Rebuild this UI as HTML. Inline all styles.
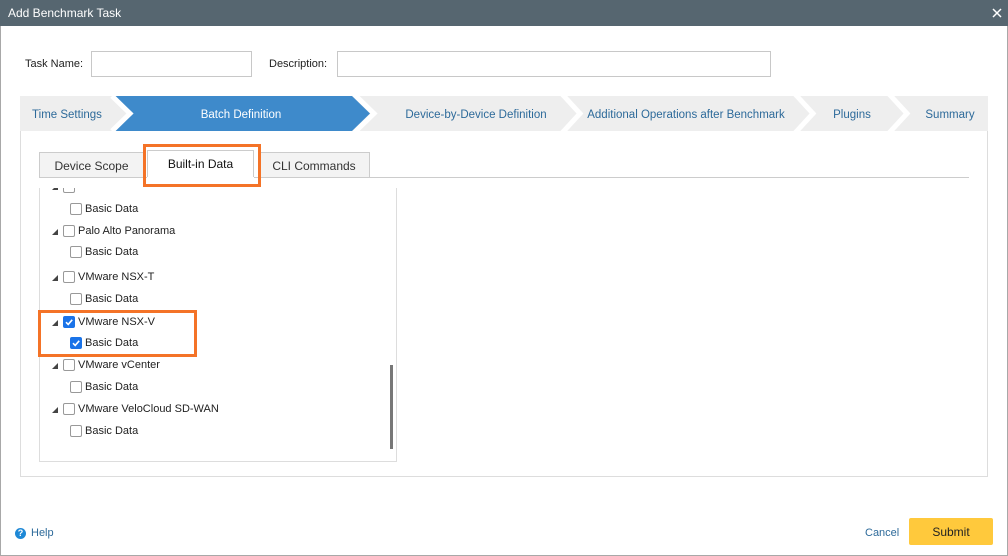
<!DOCTYPE html>
<html><head><style>
*{box-sizing:border-box;margin:0;padding:0}
body{width:1008px;height:556px;position:relative;background:#fff;font-family:"Liberation Sans",sans-serif;font-size:11.5px;color:#222;overflow:hidden}
.a{position:absolute}
.title{left:0;top:0;width:1008px;height:26px;background:#566670;color:#fff;font-size:12px;line-height:26px;padding-left:8px}
.frame{left:0;top:26px;width:1008px;height:530px;border:1px solid #a8a8a8;border-top:none}
.inp{border:1px solid #c8c8c8;height:26px;background:#fff}
.step{top:97px;height:35px;line-height:37px;color:#2d6a9a;font-size:11.5px;text-align:center}
.cb{width:12px;height:12px;border:1px solid #999;border-radius:2px;background:#fff}
.cb.on{background:#1a73e8;border-color:#1a73e8}
.tri{width:0;height:0;border-left:6px solid transparent;border-bottom:6px solid #444}
.row{font-size:11px;color:#222}
.tab{top:152px;height:26px;border:1px solid #ccc;border-bottom:none;background:#f3f3f3;text-align:center;line-height:27px;font-size:12px;color:#333}
</style></head><body>
<div class="a title">Add Benchmark Task</div>
<svg class="a" style="left:992px;top:8px" width="10" height="10"><path d="M1 1L9 9M9 1L1 9" stroke="#fff" stroke-width="1.5"/></svg>
<div class="a frame"></div>

<div class="a" style="left:25px;top:58px;font-size:11px">Task Name:</div>
<div class="a inp" style="left:91px;top:51px;width:161px"></div>
<div class="a" style="left:269px;top:58px;font-size:11px">Description:</div>
<div class="a inp" style="left:337px;top:51px;width:434px"></div>

<div class="a" style="left:20px;top:96px;width:968px;height:35px;background:#eeeeee"></div>
<div class="a" style="left:130px;top:96px;width:222px;height:35px;background:#3e8acb"></div>
<svg class="a" style="left:20px;top:96px" width="968" height="35">
<polygon points="92,0 110,17.5 92,35 110,35 110,0" fill="#3e8acb"/>
<polyline points="92,0 110,17.5 92,35" fill="none" stroke="#fff" stroke-width="5"/>
<polygon points="332,0 350,17.5 332,35" fill="#3e8acb"/>
<polyline points="334,-2 354,17.5 334,37" fill="none" stroke="#fff" stroke-width="5"/>
<polyline points="542,-2 560,17.5 542,37" fill="none" stroke="#fff" stroke-width="5"/>
<polyline points="775,-2 793,17.5 775,37" fill="none" stroke="#fff" stroke-width="5"/>
<polyline points="869,-2 887,17.5 869,37" fill="none" stroke="#fff" stroke-width="5"/>
</svg>
<div class="a step" style="left:20px;width:94px">Time Settings</div>
<div class="a step" style="left:130px;width:222px;color:#fff">Batch Definition</div>
<div class="a step" style="left:390px;width:172px">Device-by-Device Definition</div>
<div class="a step" style="left:582px;width:208px">Additional Operations after Benchmark</div>
<div class="a step" style="left:815px;width:74px">Plugins</div>
<div class="a step" style="left:910px;width:80px">Summary</div>
<div class="a" style="left:20px;top:131px;width:968px;height:346px;border:1px solid #ddd;border-top:none"></div>

<div class="a tab" style="left:39px;width:105px">Device Scope</div>
<div class="a tab" style="left:147px;width:107px;background:#fff;height:27px;top:150px;color:#111">Built-in Data</div>
<div class="a tab" style="left:258px;width:112px">CLI Commands</div>
<div class="a" style="left:39px;top:177px;width:930px;height:1px;background:#ccc"></div>
<div class="a" style="left:147px;top:177px;width:107px;height:1px;background:#fff"></div>
<div class="a" style="left:143px;top:144px;width:118px;height:43px;border:3px solid #f47327"></div>

<div class="a" style="left:39px;top:188px;width:358px;height:274px;border:1px solid #ddd;border-top:none"></div>
<div class="a" style="left:390px;top:365px;width:3px;height:84px;background:#777"></div>

<div class="a" style="left:40px;top:188px;width:200px;height:6px;overflow:hidden">
 <div class="a tri" style="left:12px;top:-4px"></div>
 <div class="a cb" style="left:23px;top:-7px"></div>
 <div class="a row" style="left:38px;top:-9px">Nokia NSP</div>
</div>
<div class="a cb" style="left:70px;top:203px"></div><div class="a row" style="left:85px;top:203px">Basic Data</div>
<div class="a tri" style="left:52px;top:229px"></div><div class="a cb" style="left:63px;top:225px"></div><div class="a row" style="left:78px;top:225px">Palo Alto Panorama</div>
<div class="a cb" style="left:70px;top:246px"></div><div class="a row" style="left:85px;top:246px">Basic Data</div>
<div class="a tri" style="left:52px;top:275px"></div><div class="a cb" style="left:63px;top:271px"></div><div class="a row" style="left:78px;top:271px">VMware NSX-T</div>
<div class="a cb" style="left:70px;top:293px"></div><div class="a row" style="left:85px;top:293px">Basic Data</div>
<div class="a tri" style="left:52px;top:320px"></div><div class="a cb on" style="left:63px;top:316px"></div><div class="a row" style="left:78px;top:316px">VMware NSX-V</div>
<div class="a cb on" style="left:70px;top:337px"></div><div class="a row" style="left:85px;top:337px">Basic Data</div>
<svg class="a" style="left:63px;top:316px" width="12" height="12"><path d="M3 6.2L5.2 8.4L9.2 3.8" stroke="#fff" stroke-width="1.6" fill="none"/></svg>
<svg class="a" style="left:70px;top:337px" width="12" height="12"><path d="M3 6.2L5.2 8.4L9.2 3.8" stroke="#fff" stroke-width="1.6" fill="none"/></svg>
<div class="a tri" style="left:52px;top:363px"></div><div class="a cb" style="left:63px;top:359px"></div><div class="a row" style="left:78px;top:359px">VMware vCenter</div>
<div class="a cb" style="left:70px;top:381px"></div><div class="a row" style="left:85px;top:381px">Basic Data</div>
<div class="a tri" style="left:52px;top:407px"></div><div class="a cb" style="left:63px;top:403px"></div><div class="a row" style="left:78px;top:403px">VMware VeloCloud SD-WAN</div>
<div class="a cb" style="left:70px;top:425px"></div><div class="a row" style="left:85px;top:425px">Basic Data</div>
<div class="a" style="left:38px;top:310px;width:159px;height:47px;border:3px solid #f47327"></div>

<div class="a" style="left:15px;top:528px;width:11px;height:11px;border-radius:50%;background:#1e88d6;color:#fff;font-size:9px;font-weight:bold;text-align:center;line-height:11px">?</div>
<div class="a" style="left:31px;top:527px;color:#2d6a9a;font-size:11px">Help</div>
<div class="a" style="left:865px;top:527px;color:#2d6a9a;font-size:11px">Cancel</div>
<div class="a" style="left:909px;top:518px;width:84px;height:27px;background:#ffc93c;border-radius:2px;text-align:center;line-height:28px;font-size:12px;color:#222">Submit</div>
</body></html>
